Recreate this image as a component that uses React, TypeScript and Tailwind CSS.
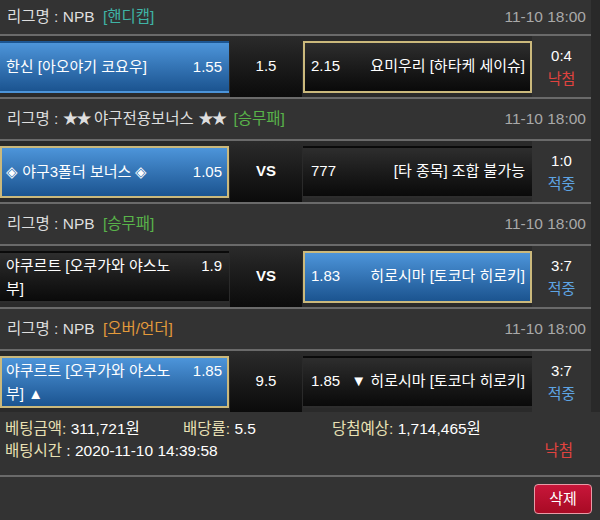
import React from 'react';

type Side = 'blue' | 'black';

interface Game {
  league: React.ReactNode;
  tag: string;
  tagColor: string;
  date: string;
  home: string;
  homeOdds: string;
  homeStyle: Side;
  homeSelected: boolean;
  mid: string;
  midBold?: boolean;
  away: string;
  awayOdds: string;
  awayStyle: Side;
  awaySelected: boolean;
  score: string;
  result: '낙첨' | '적중';
}

const Stars = () => <span className="tracking-[-2px]">★★</span>;

const games: Game[] = [
  {
    league: 'NPB',
    tag: '[핸디캡]',
    tagColor: 'text-[#3fb3a5]',
    date: '11-10 18:00',
    home: '한신 [아오야기 코요우]',
    homeOdds: '1.55',
    homeStyle: 'blue',
    homeSelected: false,
    mid: '1.5',
    away: '요미우리 [하타케 세이슈]',
    awayOdds: '2.15',
    awayStyle: 'black',
    awaySelected: true,
    score: '0:4',
    result: '낙첨',
  },
  {
    league: (
      <>
        <Stars /> 야구전용보너스 <Stars />
      </>
    ),
    tag: '[승무패]',
    tagColor: 'text-[#59b34a]',
    date: '11-10 18:00',
    home: '◈ 야구3폴더 보너스 ◈',
    homeOdds: '1.05',
    homeStyle: 'blue',
    homeSelected: true,
    mid: 'VS',
    midBold: true,
    away: '[타 종목] 조합 불가능',
    awayOdds: '777',
    awayStyle: 'black',
    awaySelected: false,
    score: '1:0',
    result: '적중',
  },
  {
    league: 'NPB',
    tag: '[승무패]',
    tagColor: 'text-[#59b34a]',
    date: '11-10 18:00',
    home: '야쿠르트 [오쿠가와 야스노부]',
    homeOdds: '1.9',
    homeStyle: 'black',
    homeSelected: false,
    mid: 'VS',
    midBold: true,
    away: '히로시마 [토코다 히로키]',
    awayOdds: '1.83',
    awayStyle: 'blue',
    awaySelected: true,
    score: '3:7',
    result: '적중',
  },
  {
    league: 'NPB',
    tag: '[오버/언더]',
    tagColor: 'text-[#e39a3b]',
    date: '11-10 18:00',
    home: '야쿠르트 [오쿠가와 야스노부] ▲',
    homeOdds: '1.85',
    homeStyle: 'blue',
    homeSelected: true,
    mid: '9.5',
    away: '▼ 히로시마 [토코다 히로키]',
    awayOdds: '1.85',
    awayStyle: 'black',
    awaySelected: false,
    score: '3:7',
    result: '적중',
  },
];

const boxClass = (style: Side, selected: boolean) => {
  const bg =
    style === 'blue'
      ? 'bg-gradient-to-b from-[#4d95da] to-[#1b5490]'
      : 'bg-gradient-to-b from-[#2e2e2e] to-[#0a0a0a]';
  const border = selected ? 'border-2 border-[#cbb97c]' : 'border-2 border-transparent';
  return `${bg} ${border}`;
};

const GameBlock: React.FC<{ game: Game; first: boolean }> = ({ game, first }) => (
  <div>
    {/* League header */}
    <div
      className={`flex items-center justify-between pl-[7px] pr-[5px] border-b-2 border-[#6a6a6a] text-[15.5px] ${
        first ? 'h-[36px]' : 'h-[44px] border-t-2'
      }`}
    >
      <div className="text-[#dedede]">
        리그명 : {game.league} <span className={`ml-[4px] ${game.tagColor}`}>{game.tag}</span>
      </div>
      <div className="text-[#a9a9a9]">{game.date}</div>
    </div>

    {/* Bet row */}
    <div className="flex h-[61px] items-center bg-[#2a2a2a]">
      <div className={`w-[229px] h-[52px] flex items-center pl-[4px] pr-[5px] ${boxClass(game.homeStyle, game.homeSelected)}`}>
        <div className="flex w-full items-start justify-between leading-[23px]">
          <span className="w-[172px] text-white">{game.home}</span>
          <span className="text-white">{game.homeOdds}</span>
        </div>
      </div>
      <div
        className={`ml-px w-[72px] h-full flex items-center justify-center bg-gradient-to-b from-[#2b2b2b] to-[#0b0b0b] text-white ${
          game.midBold ? 'font-bold' : ''
        }`}
      >
        {game.mid}
      </div>
      <div className={`ml-px w-[229px] h-[52px] flex items-center justify-between pl-[6px] pr-[5px] ${boxClass(game.awayStyle, game.awaySelected)}`}>
        <span className="text-white">{game.awayOdds}</span>
        <span className="text-white">{game.away}</span>
      </div>
      <div className="flex-1 h-full flex flex-col items-center justify-center leading-[23px] bg-[#333333]">
        <span className="text-white">{game.score}</span>
        <span className={game.result === '낙첨' ? 'text-[#e0433f]' : 'text-[#5ea4e2]'}>{game.result}</span>
      </div>
    </div>
  </div>
);

export default function App() {
  return (
    <div
      className="w-[600px] h-[520px] overflow-hidden bg-[#333333] text-[15px] text-white"
      style={{ fontFamily: '"Liberation Sans", "Noto Sans CJK KR", sans-serif' }}
    >
      <div className="flex">
        <div className="w-[591px]">
          {games.map((g, i) => (
            <GameBlock key={i} game={g} first={i === 0} />
          ))}
        </div>
        <div className="flex-1 bg-[#292929]" />
      </div>

      {/* Bet summary */}
      <div className="pt-[6px] pb-[13px] pl-[5px] border-b-2 border-[#6a6a6a] leading-[22px] text-[15.5px]">
        <div className="flex">
          <div className="w-[178px]">
            <span className="text-[#e8e0b4]">베팅금액:</span> 311,721원
          </div>
          <div className="w-[149px]">
            <span className="text-[#e8e0b4]">배당률:</span> 5.5
          </div>
          <div>
            <span className="text-[#e8e0b4]">당첨예상:</span> 1,714,465원
          </div>
        </div>
        <div className="flex">
          <div>
            <span className="text-[#e8e0b4]">배팅시간</span> : 2020-11-10 14:39:58
          </div>
          <div className="ml-auto mr-[27px] text-[#e0433f]">낙첨</div>
        </div>
      </div>

      <div className="flex justify-end pt-[7px] pr-[8px]">
        <button className="w-[58px] h-[30px] rounded-[4px] border border-[#e89aa6] bg-gradient-to-b from-[#c8163a] to-[#a80a24] text-white">
          삭제
        </button>
      </div>
    </div>
  );
}
